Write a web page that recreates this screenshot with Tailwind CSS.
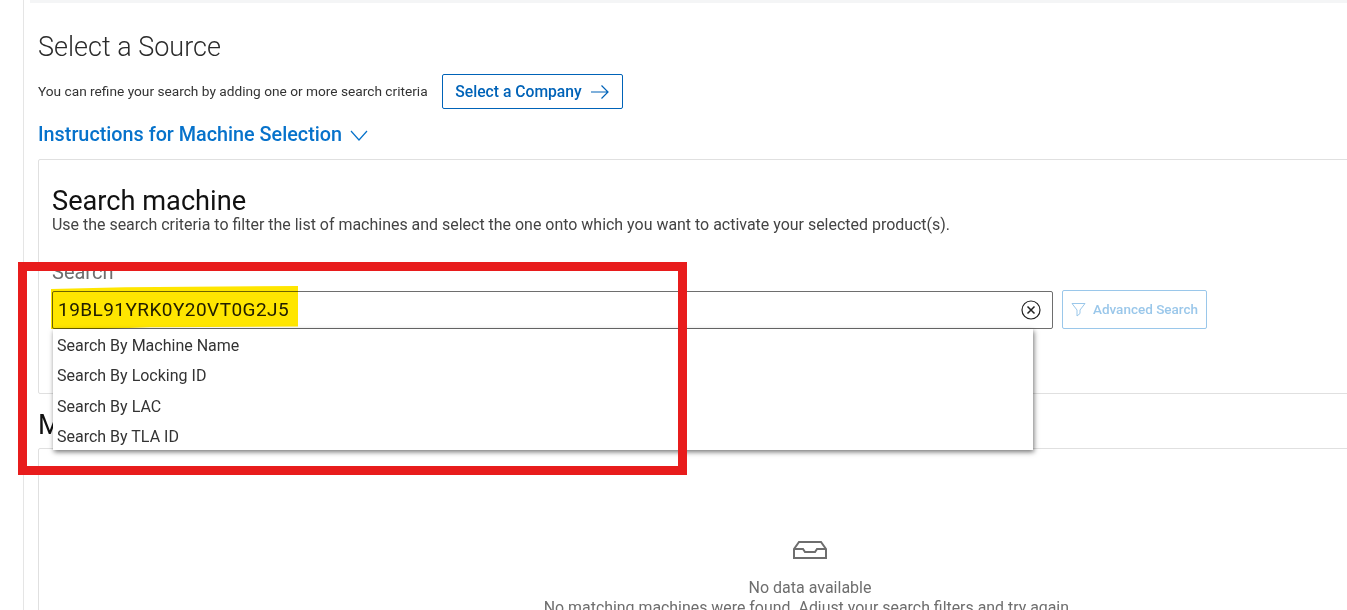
<!DOCTYPE html>
<html lang="en">
<head>
    <meta charset="UTF-8">
    <meta name="viewport" content="width=device-width, initial-scale=1.0">
    <title>Select a Source</title>
    <script src="https://cdn.jsdelivr.net/npm/@tailwindcss/browser@4"></script>
</head>
<body class="bg-white h-[610px] overflow-hidden font-['Roboto',sans-serif] relative">
    <div class="ml-[23px] border-l border-[#e5e5e5] h-[610px] pl-[6px] overflow-hidden">
        <!-- Top strip -->
        <div class="h-1 bg-[#f4f5f6] -mt-px"></div>

        <div class="pl-[8px] w-[1552px]">
            <h1 class="text-[27px] leading-[34px] font-light text-[#2b2b2b] mt-[27px]">Select a Source</h1>

            <div class="flex items-center mt-[10px]">
                <span class="text-[13.7px] text-[#333] w-[404px]">You can refine your search by adding one or more search criteria</span>
                <button class="h-[35px] w-[181px] border border-[#0063b8] rounded-[2px] text-[#0063b8] text-[15.7px] font-medium flex items-center justify-center gap-2">
                    Select a Company
                    <svg class="w-5 h-5" viewBox="0 0 20 20" fill="none" stroke="#0063b8" stroke-width="1.2"><path d="M1 10h17M11.500 3.500 18 10l-6.500 6.500"/></svg>
                </button>
            </div>

            <div class="flex items-center gap-2 mt-[13px] text-[#0672cb] text-[19.8px] font-medium leading-[26px]">
                Instructions for Machine Selection
                <svg class="w-[18px] h-[18px]" viewBox="0 0 18 18" fill="none" stroke="#0672cb" stroke-width="1.2"><path d="M1 5l8 9 8-9"/></svg>
            </div>

            <!-- Search card -->
            <div class="mt-[11px] h-[235px] border border-[#e0e0e0] rounded-[2px] pl-[13px] pt-[24px]">
                <h2 class="text-[27.200px] leading-[34px] text-[#111]">Search machine</h2>
                <p class="text-[15.960px] leading-[20px] text-[#444] -mt-[3px]">Use the search criteria to filter the list of machines and select the one onto which you want to activate your selected product(s).</p>
                <div class="text-xl leading-6 text-[#6e6e6e] mt-[25px]">Search</div>

                <div class="flex items-start gap-[9px] mt-[7px]">
                    <div class="relative w-[1001px]">
                        <div class="h-[38px] border border-[#6e6e6e] rounded-[2px] flex items-center justify-between pl-[5px] pr-[11px] text-[19px] tracking-[0.45px] text-[#222]">
                            19BL91YRK0Y20VT0G2J5
                            <svg class="w-5 h-5" viewBox="0 0 20 20" fill="none" stroke="#222" stroke-width="1.2"><circle cx="10" cy="10" r="9"/><path d="M6.500 6.500l7 7M13.500 6.500l-7 7" stroke-width="1.500"/></svg>
                        </div>
                        <!-- Suggestions -->
                        <ul class="absolute z-10 left-px top-[38px] w-[980px] h-[121px] bg-white shadow-[1px_2px_5px_rgba(0,0,0,0.55)] text-base text-[#333] pl-1">
                            <li class="h-[30.400px] leading-[34px]">Search By Machine Name</li>
                            <li class="h-[30.400px] leading-[34px]">Search By Locking ID</li>
                            <li class="h-[30.400px] leading-[34px]">Search By LAC</li>
                            <li class="h-[30.400px] leading-[34px]">Search By TLA ID</li>
                        </ul>
                    </div>
                    <button class="-mt-px h-[39px] w-[145px] border border-[#9ac7ea] rounded-[2px] text-[#9ac7ea] text-[13.500px] font-medium flex items-center justify-center gap-[7px]">
                        <svg class="w-[15px] h-[15px]" viewBox="0 0 15 15" fill="none" stroke="#9ac7ea" stroke-width="1"><path d="M1 1.500h13L9 8v3.500l-3 2.500V8z"/></svg>
                        Advanced Search
                    </button>
                </div>
            </div>

            <h2 class="text-[27px] leading-[34px] text-[#111] mt-[14px]">Machines</h2>

            <!-- Empty state -->
            <div class="mt-[6px] h-[200px] border border-[#e0e0e0] rounded-[2px] flex flex-col items-center pt-[91px] text-base leading-[20px] text-[#6e6e6e]">
                <svg class="w-[36px] h-[20px]" viewBox="0 0 36 20" fill="none" stroke="#6e6e6e" stroke-width="2"><path d="M2 9 7 2h22l5 7v9H2zM2 9h9l2 3h10l2-3h9"/></svg>
                <div class="mt-[18px]">No data available</div>
                <div class="text-[15.900px] -ml-[3px] whitespace-nowrap">No matching machines were found. Adjust your search filters and try again.</div>
            </div>
        </div>
    </div>

    <!-- Annotations pasted over the screenshot -->
    <div class="absolute z-20 left-[18px] top-[262px] w-[669px] h-[213px] border-[9px] border-[#e81c1c]"></div>
    <div class="absolute z-20 left-[51px] top-[286px] w-[247px] h-[43px] bg-[#ffe600] mix-blend-multiply [clip-path:polygon(0_7%,30%_3%,100%_0,100%_94%,40%_96%,20%_100%,0_100%)]"></div>
</body>
</html>
